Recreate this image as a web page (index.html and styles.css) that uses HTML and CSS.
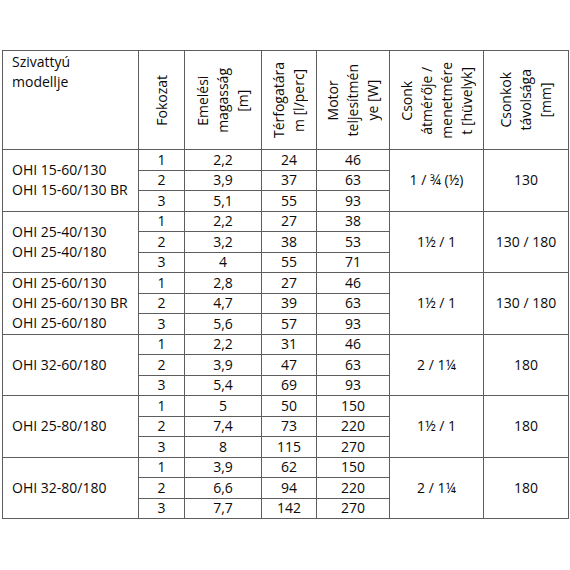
FILE: index.html
```html
<!DOCTYPE html>
<html lang="hu">
<head>
<meta charset="utf-8">
<title>Szivattyú modellek</title>
<link rel="stylesheet" href="styles.css">
</head>
<body>
<table class="spec">
  <colgroup>
    <col class="c-model"><col class="c-step"><col class="c-head"><col class="c-flow"><col class="c-motor"><col class="c-conn"><col class="c-dist">
  </colgroup>
  <thead>
    <tr class="head">
      <th class="model-h">Szivattyú<br>modellje</th>
      <th class="rot"><span>Fokozat</span></th>
      <th class="rot"><span>Emelési<br>magasság<br>[m]</span></th>
      <th class="rot"><span>Térfogatára<br>m [l/perc]</span></th>
      <th class="rot"><span>Motor<br>teljesítmén<br>ye [W]</span></th>
      <th class="rot"><span>Csonk<br>átmérője /<br>menetmére<br>t [hüvelyk]</span></th>
      <th class="rot"><span>Csonkok<br>távolsága<br>[mm]</span></th>
    </tr>
  </thead>
  <tbody>
    <tr><td rowspan="3" class="model">OHI 15-60/130<br>OHI 15-60/130 BR</td><td>1</td><td>2,2</td><td>24</td><td>46</td><td rowspan="3">1 / ¾ (½)</td><td rowspan="3">130</td></tr>
    <tr><td>2</td><td>3,9</td><td>37</td><td>63</td></tr>
    <tr><td>3</td><td>5,1</td><td>55</td><td>93</td></tr>

    <tr><td rowspan="3" class="model">OHI 25-40/130<br>OHI 25-40/180</td><td>1</td><td>2,2</td><td>27</td><td>38</td><td rowspan="3">1½ / 1</td><td rowspan="3">130 / 180</td></tr>
    <tr><td>2</td><td>3,2</td><td>38</td><td>53</td></tr>
    <tr><td>3</td><td>4</td><td>55</td><td>71</td></tr>

    <tr><td rowspan="3" class="model">OHI 25-60/130<br>OHI 25-60/130 BR<br>OHI 25-60/180</td><td>1</td><td>2,8</td><td>27</td><td>46</td><td rowspan="3">1½ / 1</td><td rowspan="3">130 / 180</td></tr>
    <tr><td>2</td><td>4,7</td><td>39</td><td>63</td></tr>
    <tr><td>3</td><td>5,6</td><td>57</td><td>93</td></tr>

    <tr><td rowspan="3" class="model">OHI 32-60/180</td><td>1</td><td>2,2</td><td>31</td><td>46</td><td rowspan="3">2 / 1¼</td><td rowspan="3">180</td></tr>
    <tr><td>2</td><td>3,9</td><td>47</td><td>63</td></tr>
    <tr><td>3</td><td>5,4</td><td>69</td><td>93</td></tr>

    <tr><td rowspan="3" class="model">OHI 25-80/180</td><td>1</td><td>5</td><td>50</td><td>150</td><td rowspan="3">1½ / 1</td><td rowspan="3">180</td></tr>
    <tr><td>2</td><td>7,4</td><td>73</td><td>220</td></tr>
    <tr><td>3</td><td>8</td><td>115</td><td>270</td></tr>

    <tr><td rowspan="3" class="model">OHI 32-80/180</td><td>1</td><td>3,9</td><td>62</td><td>150</td><td rowspan="3">2 / 1¼</td><td rowspan="3">180</td></tr>
    <tr><td>2</td><td>6,6</td><td>94</td><td>220</td></tr>
    <tr><td>3</td><td>7,7</td><td>142</td><td>270</td></tr>
  </tbody>
</table>
</body>
</html>
```

FILE: styles.css
```css
html, body {
  margin: 0;
  background: #ffffff;
}

body {
  padding: 50px 3px 0 2px;
  font-family: "Open Sans", "Noto Sans", sans-serif;
  font-size: 14px;
  color: #0a0a0a;
}

.spec {
  border-collapse: collapse;
  table-layout: fixed;
  width: 566px;
}

.c-model { width: 136px; }
.c-step  { width: 46px; }
.c-head  { width: 77px; }
.c-flow  { width: 55px; }
.c-motor { width: 73px; }
.c-conn  { width: 94px; }
.c-dist  { width: 85px; }

.spec th,
.spec td {
  border: 1px solid #5e5e5e;
  padding: 0;
  font-weight: normal;
  line-height: 18px;
  text-align: center;
  vertical-align: middle;
}

.spec tbody tr {
  height: 20.5px;
}

.head {
  height: 99px;
}

.spec .model-h {
  text-align: left;
  vertical-align: top;
  line-height: 20px;
  padding: 1px 0 0 9px;
}

.spec .model {
  text-align: left;
  line-height: 20px;
  padding-left: 9px;
}

.rot span {
  display: inline-block;
  writing-mode: vertical-rl;
  transform: rotate(180deg);
  text-align: center;
  vertical-align: middle;
  line-height: 20px;
}
```
